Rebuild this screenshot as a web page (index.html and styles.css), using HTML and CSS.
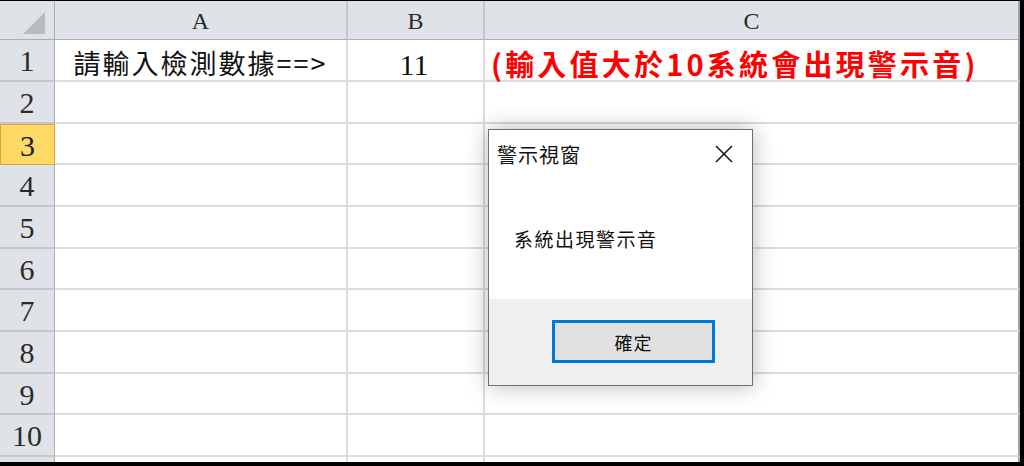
FILE: index.html
```html
<!DOCTYPE html>
<html lang="zh-Hant">
<head>
<meta charset="utf-8">
<link rel="stylesheet" href="styles.css">
</head>
<body>
<div class="screen">
  <div class="sheet">
    <div class="hd corner"><svg width="54" height="38" viewBox="0 0 54 38"><polygon points="23,33 45,33 45,11" fill="#b9bcbf"/></svg></div>
    <div class="hd col">A</div>
    <div class="hd col">B</div>
    <div class="hd col last">C</div>

    <div class="hd row">1</div>
    <div class="cell center cjk">請輸入檢測數據==&gt;</div>
    <div class="cell center num">11</div>
    <div class="cell last red">(輸入值大於10系統會出現警示音)</div>

    <div class="hd row">2</div><div class="cell"></div><div class="cell"></div><div class="cell last"></div>
    <div class="hd row sel">3</div><div class="cell"></div><div class="cell"></div><div class="cell last"></div>
    <div class="hd row">4</div><div class="cell"></div><div class="cell"></div><div class="cell last"></div>
    <div class="hd row">5</div><div class="cell"></div><div class="cell"></div><div class="cell last"></div>
    <div class="hd row">6</div><div class="cell"></div><div class="cell"></div><div class="cell last"></div>
    <div class="hd row">7</div><div class="cell"></div><div class="cell"></div><div class="cell last"></div>
    <div class="hd row">8</div><div class="cell"></div><div class="cell"></div><div class="cell last"></div>
    <div class="hd row">9</div><div class="cell"></div><div class="cell"></div><div class="cell last"></div>
    <div class="hd row">10</div><div class="cell"></div><div class="cell"></div><div class="cell last"></div>
    <div class="hd row"></div><div class="cell"></div><div class="cell"></div><div class="cell last"></div>
  </div>

  <div class="dialog">
    <div class="dlg-title">
      <span class="dlg-caption">警示視窗</span>
      <svg class="dlg-close" width="20" height="20" viewBox="0 0 20 20"><path d="M2 2 L18 18 M18 2 L2 18" stroke="#1a1a1a" stroke-width="1.6" fill="none"/></svg>
    </div>
    <div class="dlg-body">系統出現警示音</div>
    <div class="dlg-foot">
      <div class="dlg-btn">確定</div>
    </div>
  </div>
</div>
</body>
</html>
```

FILE: styles.css
```css
html, body {
  margin: 0;
  padding: 0;
  background: #000;
}

.screen {
  position: relative;
  width: 1024px;
  height: 466px;
  overflow: hidden;
  background: #000;
}

.sheet {
  margin-top: 1px;
  width: 1020px;
  height: 461px;
  overflow: hidden;
  background: #fff;
  display: grid;
  grid-template-columns: 55px 293px 137px 535px;
  grid-template-rows: 39px 42px 42px 41px 42px 42px 41px 42px 42px 41px 42px 20px;
  font-family: "Noto Sans CJK TC", "Noto Sans", sans-serif;
}

.hd {
  background: #dfe3e8;
  box-sizing: border-box;
  color: #2b2b2b;
  font-family: "Liberation Serif", serif;
  display: flex;
  align-items: center;
  justify-content: center;
}

.corner {
  border-right: 1px solid #a9aeb4;
  border-bottom: 1px solid #a9aeb4;
  align-items: stretch;
  justify-content: stretch;
}

.col {
  font-size: 24px;
  border-right: 2px solid #c3c7cc;
  border-bottom: 1px solid #a9aeb4;
  padding-top: 2px;
}

.col.last {
  border-right: 2px solid #9ea3a8;
}

.row {
  font-size: 30px;
  border-right: 1px solid #a9aeb4;
  border-bottom: 2px solid #c3c7cc;
  padding-top: 2px;
}

.row.sel {
  background: #ffd966;
  border: 1px solid #e2a33c;
  color: #222;
}

.cell {
  box-sizing: border-box;
  border-right: 2px solid #dcdcdc;
  border-bottom: 2px solid #dcdcdc;
  display: flex;
  align-items: center;
  white-space: nowrap;
  overflow: visible;
}

.cell.last {
  border-right: 2px solid #9ea3a8;
}

.center {
  justify-content: center;
}

.cjk {
  font-size: 27px;
  letter-spacing: 2px;
  color: #111;
  padding-top: 5px;
}

.num {
  font-family: "Liberation Serif", serif;
  font-size: 30px;
  color: #111;
  padding-right: 3px;
  padding-top: 9px;
}

.red {
  color: #ff0000;
  font-weight: bold;
  font-size: 29px;
  letter-spacing: 3.2px;
  padding-left: 6px;
  padding-top: 5px;
}

/* dialog overlay */
.dialog {
  position: absolute;
  left: 488px;
  top: 129px;
  width: 265px;
  height: 257px;
  box-sizing: border-box;
  border: 1px solid #6e6e6e;
  background: #fff;
  box-shadow: 0 0 22px rgba(0, 0, 0, 0.28);
  display: flex;
  flex-direction: column;
  font-family: "Noto Sans CJK TC", "Noto Sans", sans-serif;
  color: #111;
}

.dlg-title {
  height: 48px;
  display: flex;
  align-items: center;
  justify-content: space-between;
  padding: 0 18px 0 8px;
}

.dlg-caption {
  font-size: 20px;
  letter-spacing: 1px;
}

.dlg-body {
  flex: 1;
  padding-left: 25px;
  padding-top: 47px;
  font-size: 19px;
  letter-spacing: 1.5px;
  box-sizing: border-box;
}

.dlg-foot {
  height: 86px;
  background: #f0f0f0;
  display: flex;
  justify-content: flex-end;
  padding-right: 37px;
  padding-top: 21px;
  box-sizing: border-box;
}

.dlg-btn {
  width: 163px;
  height: 43px;
  box-sizing: border-box;
  border: 2px solid #0078d7;
  background: #e1e1e1;
  box-shadow: inset 0 0 0 1px #0078d7;
  display: flex;
  align-items: center;
  justify-content: center;
  font-size: 18px;
  letter-spacing: 1px;
}
```
